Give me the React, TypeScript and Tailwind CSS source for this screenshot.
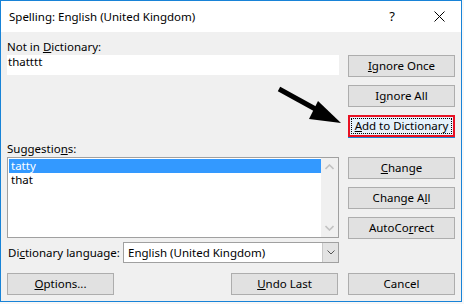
const font = "font-['Segoe_UI','Noto_Sans',sans-serif]";

function Btn({ children, className = "" }: { children: React.ReactNode; className?: string }) {
  return (
    <div
      className={`flex h-[22px] w-[107px] items-center justify-center border border-[#adadad] bg-[#e1e1e1] text-[11.5px] leading-none text-black ${className}`}
    >
      {children}
    </div>
  );
}

export default function App() {
  return (
    <div className={`relative h-[304px] w-[464px] overflow-hidden bg-[#f7f7f7] ${font}`}>
      <div className="relative flex h-[302px] w-[462px] flex-col border border-[#1883d7] bg-[#f0f0f0]">
        {/* Title bar */}
        <div className="flex h-[31px] shrink-0 items-center bg-white pl-[8px] text-[11.5px] text-black">
          <span className="flex-1">Spelling: English (United Kingdom)</span>
          <span className="mr-[39px] text-[13px]">?</span>
          <svg width="11" height="11" viewBox="0 0 11 11" className="mr-[16px]">
            <path d="M0.5 0.5 L10.5 10.5 M10.5 0.5 L0.5 10.5" stroke="#000" strokeWidth="1" />
          </svg>
        </div>

        {/* Body */}
        <div className="flex flex-1 gap-[9px] pl-[6px] text-[11.5px] text-black">
          {/* Left column */}
          <div className="flex w-[332px] flex-col pt-[7px]">
            <div className="h-[16px] leading-[16px]">
              Not in <u>D</u>ictionary:
            </div>
            <div className="h-[20px] bg-white pl-[1px] leading-[14px]">thatttt</div>

            <div className="mt-[66px] h-[16px] leading-[16px]">
              Suggestio<u>n</u>s:
            </div>
            <div className="flex h-[81px] border border-[#a0a0a0] bg-white">
              <div className="flex-1 pl-[1px] pt-[1px]">
                <div className="h-[14px] bg-[#3399ff] pl-[2px] leading-[14px] text-white">tatty</div>
                <div className="h-[14px] pl-[2px] leading-[14px]">that</div>
              </div>
              <div className="flex w-[17px] flex-col items-center justify-between bg-[#f0f0f0] py-[6px]">
                <svg width="9" height="6" viewBox="0 0 9 6">
                  <path d="M0.5 5 L4.5 1 L8.5 5" stroke="#c2c2c2" strokeWidth="1.6" fill="none" />
                </svg>
                <svg width="9" height="6" viewBox="0 0 9 6">
                  <path d="M0.5 1 L4.5 5 L8.5 1" stroke="#c2c2c2" strokeWidth="1.6" fill="none" />
                </svg>
              </div>
            </div>

            <div className="mt-[4px] flex h-[21px] items-center">
              <span className="w-[116px] whitespace-nowrap pl-[1px]">
                Di<u>c</u>tionary language:
              </span>
              <div className="flex h-[21px] flex-1 border border-[#a0a0a0] bg-white">
                <span className="flex-1 pl-[4px] leading-[19px]">English (United Kingdom)</span>
                <div className="flex w-[16px] items-center justify-center border-l border-[#c8c8c8] bg-[#e3e3e3]">
                  <svg width="8" height="5" viewBox="0 0 8 5">
                    <path d="M0.5 0.5 L4 4 L7.5 0.5" stroke="#555" strokeWidth="1" fill="none" />
                  </svg>
                </div>
              </div>
            </div>

            <div className="mt-[10px] flex justify-between pr-[1px]">
              <Btn className="h-[21px]">
                <span>
                  <u>O</u>ptions...
                </span>
              </Btn>
              <Btn className="h-[21px]">
                <span>
                  <u>U</u>ndo Last
                </span>
              </Btn>
            </div>
          </div>

          {/* Right column */}
          <div className="flex w-[107px] flex-col gap-[8px] pt-[23px]">
            <Btn>
              <span>
                <u>I</u>gnore Once
              </span>
            </Btn>
            <Btn>
              <span>
                I<u>g</u>nore All
              </span>
            </Btn>
            <div className="h-[22px] w-[107px] border-2 border-[#e81123] bg-[#e5f1fb] p-[1px] shadow-[0_1px_0_#1883d7]">
              <div className="flex h-full items-center justify-center border border-dotted border-black text-[11.5px] leading-none">
                <span>
                  <u>A</u>dd to Dictionary
                </span>
              </div>
            </div>
            <Btn className="mt-[12px]">
              <span>
                <u>C</u>hange
              </span>
            </Btn>
            <Btn>
              <span>
                Change A<u>l</u>l
              </span>
            </Btn>
            <Btn>
              <span>
                AutoCo<u>r</u>rect
              </span>
            </Btn>
            <Btn className="mt-[26px] h-[21px]">Cancel</Btn>
          </div>
        </div>

        {/* Annotation arrow */}
        <svg className="pointer-events-none absolute left-0 top-0" width="462" height="302" viewBox="0 0 462 302">
          <line x1="278" y1="88" x2="318" y2="110" stroke="#000" strokeWidth="5" />
          <polygon points="317,100 308,118 340,122" fill="#000" />
        </svg>
      </div>
    </div>
  );
}
